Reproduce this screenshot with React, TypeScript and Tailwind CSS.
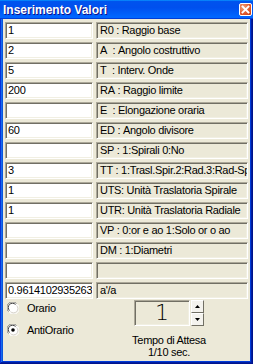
import React from "react";

const rows: [string, string][] = [
  ["1", "R0 : Raggio base"],
  ["2", "A  : Angolo costruttivo"],
  ["5", "T  : Interv. Onde"],
  ["200", "RA : Raggio limite"],
  ["", "E  : Elongazione oraria"],
  ["60", "ED : Angolo divisore"],
  ["", "SP : 1:Spirali 0:No"],
  ["3", "TT : 1:Trasl.Spir.2:Rad.3:Rad-Spir"],
  ["1", "UTS: Unità Traslatoria Spirale"],
  ["1", "UTR: Unità Traslatoria Radiale"],
  ["", "VP : 0:or e ao 1:Solo or o ao"],
  ["", "DM : 1:Diametri"],
  ["", ""],
  ["0.961410293526383", "a'/a"],
];

const sunken =
  "border border-t-[#aca899] border-l-[#aca899] border-b-white border-r-white shadow-[inset_1px_1px_#716f64,inset_-1px_-1px_#f1efe2]";

function Radio({ checked }: { checked?: boolean }) {
  return (
    <svg width="12" height="12" viewBox="0 0 12 12" className="shrink-0">
      <circle cx="6" cy="6" r="5.5" fill="#ffffff" />
      <path d="M1.5 9.5 A5 5 0 0 1 9.5 1.5" fill="none" stroke="#808080" strokeWidth="1" />
      <path d="M2.5 8.5 A3.8 3.8 0 0 1 8.5 2.5" fill="none" stroke="#404040" strokeWidth="1" />
      <path d="M10.5 2.5 A5 5 0 0 1 2.5 10.5" fill="none" stroke="#ffffff" strokeWidth="1" />
      <path d="M9.6 3.4 A4 4 0 0 1 3.4 9.6" fill="none" stroke="#d4d0c8" strokeWidth="1" />
      {checked && <circle cx="6" cy="6" r="1.8" fill="#000000" />}
    </svg>
  );
}

export default function App() {
  return (
    <div className="w-[253px] h-[364px] flex flex-col bg-[#0855dd] shadow-[inset_-1px_-1px_#00138c,inset_1px_1px_#0831d9,inset_-2px_-2px_#001ea0,inset_2px_2px_#166aee,inset_-3px_-3px_#003bda,inset_3px_3px_#0855dd] font-['Liberation_Sans',Arial,sans-serif] text-[11px] tracking-[-0.3px] text-black overflow-hidden">
      {/* Title bar */}
      <div className="h-[19px] shrink-0 flex items-center pl-[3px] pr-[1px] bg-[linear-gradient(180deg,#0997ff,#0053ee_8%,#0050ee_40%,#0066ff_88%,#0066ff_93%,#005bff_95%,#003dd7_96%,#003dd7)]">
        <span className="text-white font-bold text-[12px] tracking-normal leading-none [text-shadow:1px_1px_#0f1089]">
          Inserimento Valori
        </span>
        <div className="ml-auto w-[13px] h-[13px] rounded-[2px] border border-white bg-[radial-gradient(circle_at_30%_30%,#f0a07a,#e0562a_60%,#c13b12)] flex items-center justify-center">
          <svg width="9" height="9" viewBox="0 0 9 9">
            <path d="M1.5 1.5 L7.5 7.5 M7.5 1.5 L1.5 7.5" stroke="#ffffff" strokeWidth="1.8" strokeLinecap="square" />
          </svg>
        </div>
      </div>

      {/* Content */}
      <div className="flex-1 mx-[3px] mb-[3px] bg-[#ece9d8] flex flex-col px-[2px] pt-[3px]">
        <div className="flex flex-col gap-[3px]">
          {rows.map(([v, l], i) => (
            <div key={i} className="flex gap-[3px] h-[17px]">
              <div className={`w-[88px] h-[17px] bg-white ${sunken} flex items-center pl-[2px] overflow-hidden whitespace-nowrap`}>
                {v}
              </div>
              <div className={`flex-1 h-[17px] bg-[#ece9d8] ${sunken} flex items-center pl-[3px] overflow-hidden whitespace-nowrap`}>
                {l.replace(/ /g, "\u00a0")}
              </div>
            </div>
          ))}
        </div>

        {/* Bottom */}
        <div className="flex flex-1">
          <div className="w-[114px] flex flex-col gap-[6px] pt-[1px] pl-[2px]">
            <div className="flex items-center h-[16px] gap-[8px]">
              <Radio />
              <span>Orario</span>
            </div>
            <div className="flex items-center h-[16px] gap-[8px]">
              <Radio checked />
              <span>AntiOrario</span>
            </div>
          </div>
          <div className="w-[100px] flex flex-col items-center pt-[1px]">
            <div className="flex gap-[1px] h-[26px]">
              <div className={`w-[56px] h-[26px] bg-[#ece9d8] ${sunken} flex items-center justify-center font-['DejaVu_Sans',sans-serif] font-extralight text-[22px] leading-none tracking-normal text-black`}>
                1
              </div>
              <div className="flex flex-col w-[13px]">
                <div className="h-[13px] bg-[#f4f3ee] border border-t-white border-l-white border-b-[#716f64] border-r-[#716f64] flex items-center justify-center">
                  <svg width="5" height="3" viewBox="0 0 5 3"><path d="M2.5 0 L5 3 L0 3 Z" fill="#000" /></svg>
                </div>
                <div className="h-[13px] bg-[#f4f3ee] border border-t-white border-l-white border-b-[#716f64] border-r-[#716f64] flex items-center justify-center">
                  <svg width="5" height="3" viewBox="0 0 5 3"><path d="M0 0 L5 0 L2.5 3 Z" fill="#000" /></svg>
                </div>
              </div>
            </div>
            <div className="mt-[8px] text-center leading-[12px]">
              <div>Tempo di Attesa</div>
              <div>1/10 sec.</div>
            </div>
          </div>
        </div>
      </div>
    </div>
  );
}
